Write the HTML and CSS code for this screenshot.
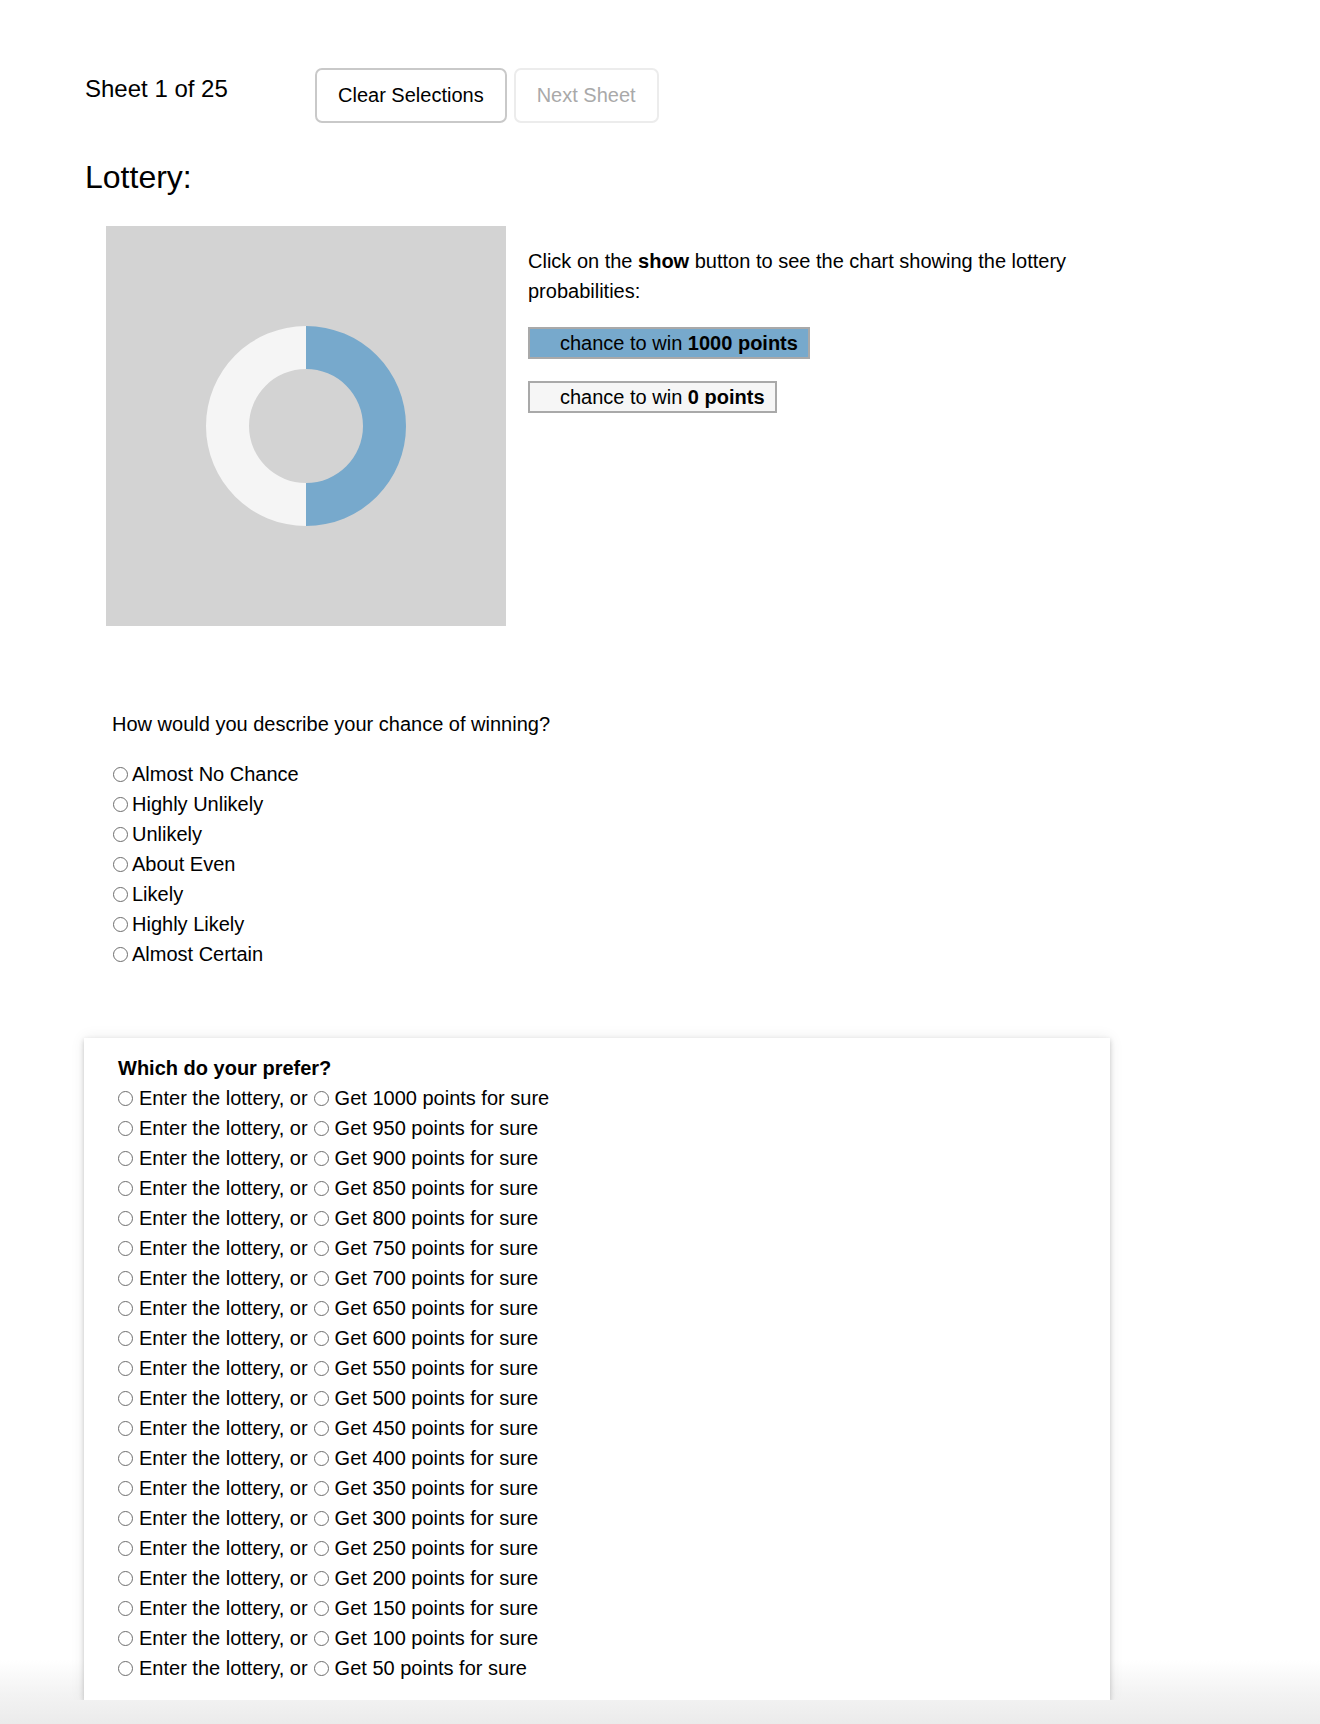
FILE: index.html
```html
<!DOCTYPE html>
<html lang="en">
<head>
<meta charset="utf-8">
<title>Lottery</title>
<link rel="stylesheet" href="styles.css">
</head>
<body>
<div class="page">
  <div class="header">
    <div class="sheet-label">Sheet 1 of 25</div>
    <div class="actions">
      <button class="btn">Clear Selections</button>
      <button class="btn btn-disabled" disabled>Next Sheet</button>
    </div>
  </div>

  <h1 class="title">Lottery:</h1>

  <div class="lottery-row">
    <div class="chart">
      <svg width="400" height="400" viewBox="0 0 400 400">
        <path d="M200 100 A100 100 0 0 1 200 300 L200 257 A57 57 0 0 0 200 143 Z" fill="#77a9cc"/>
        <path d="M200 100 A100 100 0 0 0 200 300 L200 257 A57 57 0 0 1 200 143 Z" fill="#f5f5f5"/>
      </svg>
    </div>
    <div class="info">
      <p class="info-text">Click on the <b>show</b> button to see the chart showing the lottery probabilities:</p>
      <div class="legend">
        <div class="legend-item legend-win">chance to win <b>1000 points</b></div>
        <div class="legend-item legend-lose">chance to win <b>0 points</b></div>
      </div>
    </div>
  </div>

  <div class="chance">
    <div class="question">How would you describe your chance of winning?</div>
    <div class="options">
      <label class="option"><input type="radio" name="chance"><span>Almost No Chance</span></label>
      <label class="option"><input type="radio" name="chance"><span>Highly Unlikely</span></label>
      <label class="option"><input type="radio" name="chance"><span>Unlikely</span></label>
      <label class="option"><input type="radio" name="chance"><span>About Even</span></label>
      <label class="option"><input type="radio" name="chance"><span>Likely</span></label>
      <label class="option"><input type="radio" name="chance"><span>Highly Likely</span></label>
      <label class="option"><input type="radio" name="chance"><span>Almost Certain</span></label>
    </div>
  </div>

  <div class="card">
    <div class="card-title">Which do your prefer?</div>
    <div class="rows">
      <div class="row"><input type="radio" name="r1000"><span class="a">Enter the lottery, or</span><input type="radio" name="r1000"><span class="b">Get 1000 points for sure</span></div>
      <div class="row"><input type="radio" name="r950"><span class="a">Enter the lottery, or</span><input type="radio" name="r950"><span class="b">Get 950 points for sure</span></div>
      <div class="row"><input type="radio" name="r900"><span class="a">Enter the lottery, or</span><input type="radio" name="r900"><span class="b">Get 900 points for sure</span></div>
      <div class="row"><input type="radio" name="r850"><span class="a">Enter the lottery, or</span><input type="radio" name="r850"><span class="b">Get 850 points for sure</span></div>
      <div class="row"><input type="radio" name="r800"><span class="a">Enter the lottery, or</span><input type="radio" name="r800"><span class="b">Get 800 points for sure</span></div>
      <div class="row"><input type="radio" name="r750"><span class="a">Enter the lottery, or</span><input type="radio" name="r750"><span class="b">Get 750 points for sure</span></div>
      <div class="row"><input type="radio" name="r700"><span class="a">Enter the lottery, or</span><input type="radio" name="r700"><span class="b">Get 700 points for sure</span></div>
      <div class="row"><input type="radio" name="r650"><span class="a">Enter the lottery, or</span><input type="radio" name="r650"><span class="b">Get 650 points for sure</span></div>
      <div class="row"><input type="radio" name="r600"><span class="a">Enter the lottery, or</span><input type="radio" name="r600"><span class="b">Get 600 points for sure</span></div>
      <div class="row"><input type="radio" name="r550"><span class="a">Enter the lottery, or</span><input type="radio" name="r550"><span class="b">Get 550 points for sure</span></div>
      <div class="row"><input type="radio" name="r500"><span class="a">Enter the lottery, or</span><input type="radio" name="r500"><span class="b">Get 500 points for sure</span></div>
      <div class="row"><input type="radio" name="r450"><span class="a">Enter the lottery, or</span><input type="radio" name="r450"><span class="b">Get 450 points for sure</span></div>
      <div class="row"><input type="radio" name="r400"><span class="a">Enter the lottery, or</span><input type="radio" name="r400"><span class="b">Get 400 points for sure</span></div>
      <div class="row"><input type="radio" name="r350"><span class="a">Enter the lottery, or</span><input type="radio" name="r350"><span class="b">Get 350 points for sure</span></div>
      <div class="row"><input type="radio" name="r300"><span class="a">Enter the lottery, or</span><input type="radio" name="r300"><span class="b">Get 300 points for sure</span></div>
      <div class="row"><input type="radio" name="r250"><span class="a">Enter the lottery, or</span><input type="radio" name="r250"><span class="b">Get 250 points for sure</span></div>
      <div class="row"><input type="radio" name="r200"><span class="a">Enter the lottery, or</span><input type="radio" name="r200"><span class="b">Get 200 points for sure</span></div>
      <div class="row"><input type="radio" name="r150"><span class="a">Enter the lottery, or</span><input type="radio" name="r150"><span class="b">Get 150 points for sure</span></div>
      <div class="row"><input type="radio" name="r100"><span class="a">Enter the lottery, or</span><input type="radio" name="r100"><span class="b">Get 100 points for sure</span></div>
      <div class="row"><input type="radio" name="r50"><span class="a">Enter the lottery, or</span><input type="radio" name="r50"><span class="b">Get 50 points for sure</span></div>
    </div>
  </div>
</div>
</body>
</html>
```

FILE: styles.css
```css
html {
  min-height: 100%;
  background: linear-gradient(to bottom, #ffffff 0, #ffffff calc(100% - 64px), #f3f3f3 calc(100% - 30px), #ebebeb 100%);
}

body {
  margin: 0;
  font-family: "Liberation Sans", Arial, Helvetica, sans-serif;
  color: #000;
}

.page {
  padding-left: 84px;
  width: 1026px;
}

/* Header */
.header {
  display: flex;
  align-items: flex-start;
  padding-top: 68px;
}

.sheet-label {
  width: 230px;
  margin-top: 6px;
  padding-left: 1px;
  font-size: 24px;
  line-height: 30px;
}

.actions {
  display: flex;
  gap: 7px;
}

.btn {
  height: 55px;
  padding: 0 21px;
  border: 2px solid #c9c9c9;
  border-radius: 7px;
  background: #fff;
  font-family: "Liberation Sans", Arial, Helvetica, sans-serif;
  font-size: 20px;
  color: #000;
}

.btn-disabled {
  border-color: #ececec;
  color: #a9a9a9;
}

.title {
  margin: 34px 0 0;
  padding-left: 1px;
  font-size: 32px;
  font-weight: normal;
  line-height: 40px;
}

/* Lottery chart + legend */
.lottery-row {
  display: flex;
  gap: 22px;
  margin: 29px 0 0 22px;
}

.chart {
  width: 400px;
  height: 400px;
  background: #d3d3d3;
  flex: none;
}

.chart svg {
  display: block;
}

.info {
  width: 580px;
}

.info-text {
  margin: 20px 0 0;
  font-size: 20px;
  line-height: 30px;
}

.legend {
  display: flex;
  flex-direction: column;
  align-items: flex-start;
  gap: 22px;
  margin-top: 21px;
}

.legend-item {
  border: 2px solid #a9a9a9;
  padding: 0 10px 0 30px;
  font-size: 20px;
  line-height: 28px;
}

.legend-win {
  background: #77a9cc;
}

.legend-lose {
  background: #f6f6f6;
}

/* Chance question */
.chance {
  margin: 83px 0 0 28px;
}

.question {
  font-size: 20px;
  line-height: 30px;
}

.options {
  display: flex;
  flex-direction: column;
  margin-top: 20px;
}

.option {
  display: flex;
  align-items: center;
  height: 30px;
  font-size: 20px;
}

.option input {
  margin: 0 4px 0 1px;
}

input[type="radio"] {
  appearance: none;
  -webkit-appearance: none;
  width: 15px;
  height: 15px;
  border: 1px solid #6e6e6e;
  border-radius: 50%;
  background: #fff;
  flex: none;
}

/* Preference card */
.card {
  margin-top: 69px;
  background: #fff;
  padding: 15px 32px 17px 34px;
  box-shadow: 0 2px 5px rgba(0, 0, 0, 0.2), 0 0 14px rgba(0, 0, 0, 0.08);
}

.card-title {
  font-size: 20px;
  font-weight: bold;
  line-height: 30px;
}

.rows {
  display: flex;
  flex-direction: column;
}

.row {
  display: flex;
  align-items: center;
  height: 30px;
  font-size: 20px;
}

.row input {
  margin: 0;
}

.row .a {
  margin: 0 6px 0 6px;
}

.row .b {
  margin-left: 6px;
}
```
